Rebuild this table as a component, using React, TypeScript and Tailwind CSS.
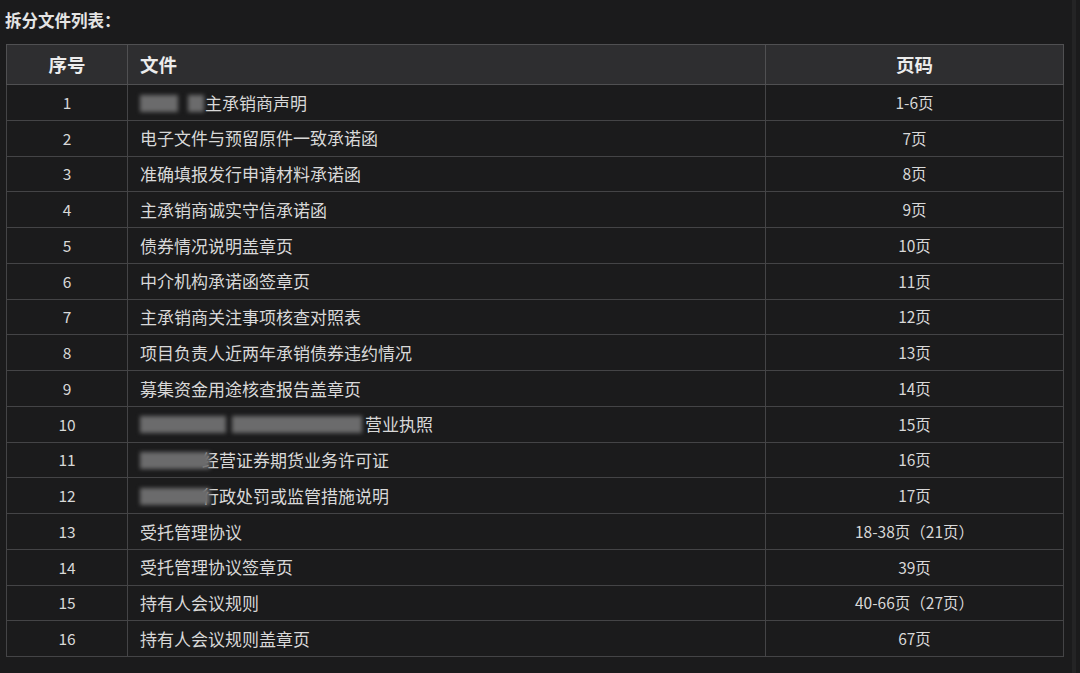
import React from 'react';

interface Row {
  no: number;
  name: string;
  pages: string;
  // redacted lead-in: spacer width before text, and blur patches [left, width]
  pad?: number;
  blurs?: [number, number][];
}

const rows: Row[] = [
  { no: 1, name: '主承销商声明', pages: '1-6页', pad: 65, blurs: [[0, 38], [48, 16]] },
  { no: 2, name: '电子文件与预留原件一致承诺函', pages: '7页' },
  { no: 3, name: '准确填报发行申请材料承诺函', pages: '8页' },
  { no: 4, name: '主承销商诚实守信承诺函', pages: '9页' },
  { no: 5, name: '债券情况说明盖章页', pages: '10页' },
  { no: 6, name: '中介机构承诺函签章页', pages: '11页' },
  { no: 7, name: '主承销商关注事项核查对照表', pages: '12页' },
  { no: 8, name: '项目负责人近两年承销债券违约情况', pages: '13页' },
  { no: 9, name: '募集资金用途核查报告盖章页', pages: '14页' },
  { no: 10, name: '营业执照', pages: '15页', pad: 225, blurs: [[0, 86], [92, 130]] },
  { no: 11, name: '经营证券期货业务许可证', pages: '16页', pad: 62, blurs: [[0, 70]] },
  { no: 12, name: '行政处罚或监管措施说明', pages: '17页', pad: 62, blurs: [[0, 70]] },
  { no: 13, name: '受托管理协议', pages: '18-38页（21页）' },
  { no: 14, name: '受托管理协议签章页', pages: '39页' },
  { no: 15, name: '持有人会议规则', pages: '40-66页（27页）' },
  { no: 16, name: '持有人会议规则盖章页', pages: '67页' },
];

const font = "font-['Microsoft_YaHei','Noto_Sans_CJK_SC',sans-serif]";

export default function App() {
  return (
    <div className={`relative w-[1080px] h-[673px] bg-[#1b1b1c] text-[#d8d8d8] overflow-hidden ${font}`}>
      <div className="absolute right-[4px] top-0 bottom-0 w-[4px] bg-[#242425]" />
      <div className="pl-[5px] pt-[8px] h-[44px] text-[16.5px] font-bold text-[#e4e4e4] leading-[24px]">
        拆分文件列表：
      </div>
      <table className="ml-[6px] w-[1057px] border-collapse table-fixed">
        <colgroup>
          <col className="w-[121px]" />
          <col className="w-[638px]" />
          <col className="w-[298px]" />
        </colgroup>
        <thead>
          <tr className="h-[40px] bg-[#2e2e30] text-[18.5px] font-bold text-[#ececec]">
            <th className="border border-[#505052] text-center">序号</th>
            <th className="border border-[#505052] text-left pl-[12px]">文件</th>
            <th className="border border-[#505052] text-center">页码</th>
          </tr>
        </thead>
        <tbody>
          {rows.map(r => (
            <tr key={r.no} className="h-[35.75px] text-[17px]">
              <td className="border border-[#444446] text-center text-[15.5px]">{r.no}</td>
              <td className="border border-[#444446] pl-[12px]">
                <div className="relative flex items-center">
                  {r.pad && <span className="inline-block shrink-0" style={{ width: r.pad }} />}
                  <span>{r.name}</span>
                  {r.blurs?.map(([l, w], i) => (
                    <span
                      key={i}
                      className="absolute top-[5px] h-[17px] bg-[#6b6b6c] blur-[2px]"
                      style={{ left: l, width: w }}
                    />
                  ))}
                </div>
              </td>
              <td className="border border-[#444446] text-center text-[15.5px]">{r.pages}</td>
            </tr>
          ))}
        </tbody>
      </table>
    </div>
  );
}
